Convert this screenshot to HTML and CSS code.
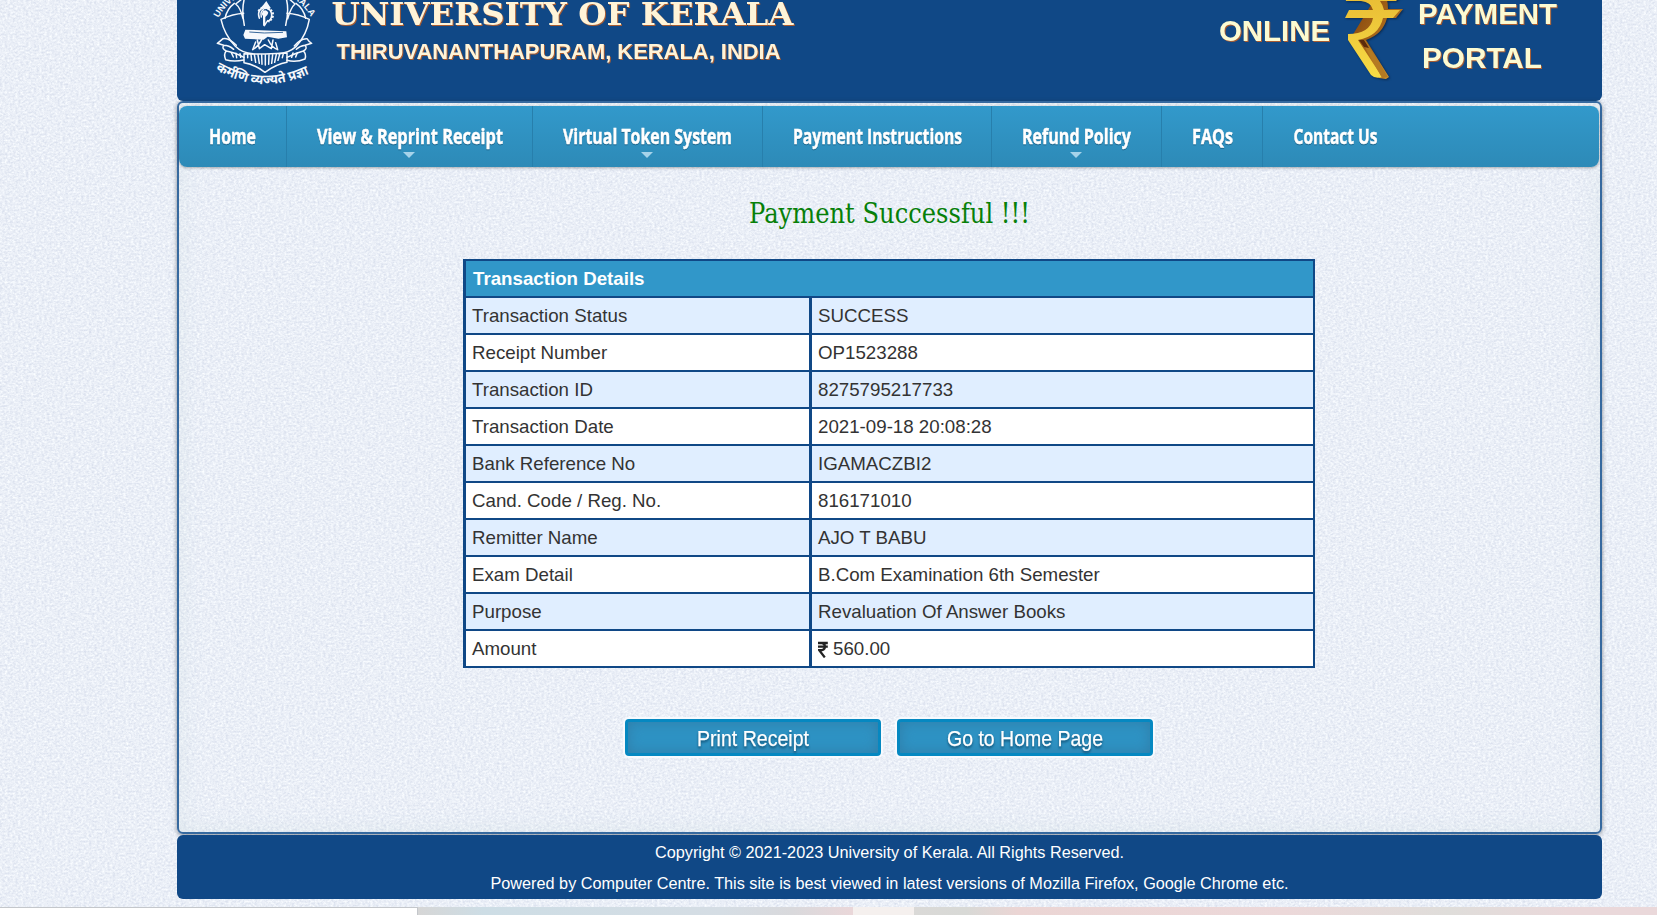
FILE: index.html
```html
<!DOCTYPE html>
<html lang="en">
<head>
<meta charset="utf-8">
<title>University of Kerala - Online Payment Portal</title>
<link rel="stylesheet" href="styles.css">
</head>
<body>
<svg class="texture" aria-hidden="true">
  <filter id="weave" x="0" y="0" width="100%" height="100%" color-interpolation-filters="sRGB">
    <feTurbulence type="fractalNoise" baseFrequency="0.38 0.5" numOctaves="3" seed="4" stitchTiles="stitch"/>
    <feColorMatrix values="0.19 0 0 0 0.823  0.17 0 0 0 0.851  0.11 0 0 0 0.913  0 0 0 0 1"/>
  </filter>
  <rect width="100%" height="100%" filter="url(#weave)"/>
</svg>
<div class="page">
  <header class="banner">
    <svg width="1425" height="101" viewBox="177 0 1425 101">
      <defs>
        <linearGradient id="gold" x1="0" y1="0" x2="0" y2="1"><stop offset="0" stop-color="#e9bd35"/><stop offset="1" stop-color="#f7dc45"/></linearGradient>
        <linearGradient id="bronze" x1="0" y1="0" x2="1" y2="1"><stop offset="0" stop-color="#7a3d0c"/><stop offset=".55" stop-color="#b06f1c"/><stop offset="1" stop-color="#dca236"/></linearGradient>
        <path id="arcTop" d="M40 54 A158 158 0 0 1 322 60"/>
        <path id="arcBottom" d="M32 209 Q175 292 322 216"/>
      </defs>
      <g class="emblem" transform="translate(205 0) scale(.3333)">
        <text class="ring"><textPath href="#arcTop" textLength="338" lengthAdjust="spacingAndGlyphs">UNIVERSITY OF KERALA</textPath></text>
        <text class="motto"><textPath href="#arcBottom" textLength="294" lengthAdjust="spacingAndGlyphs">कर्मणि व्यज्यते प्रज्ञा</textPath></text>
        <g class="lines">
          <path d="M120 -10 L92 12 Q106 22 114 56 M120 -10 Q108 25 118 76 M245 -10 L270 12 Q258 22 248 56 M242 -10 Q254 25 242 76"/>
          <path d="M116 40 Q85 42 48 58 Q58 104 91 139 Q112 160 144 161 M246 40 Q278 42 313 58 Q305 104 274 139 Q250 160 220 161"/>
          <path d="M88 10 Q66 26 60 55 M273 10 Q296 26 302 55"/>
          <path d="M54 116 Q43 126 37 130 L56 136 Q49 146 64 153 Q55 162 62 179 Q86 186 116 180 M54 116 Q70 111 94 136 M56 136 Q72 136 86 148 M64 153 Q88 157 117 172"/>
          <path d="M306 116 Q312 126 320 130 L300 136 Q309 146 295 153 Q305 162 300 177 Q273 188 246 181 M306 116 Q286 115 268 138 M300 136 Q284 138 274 148 M295 153 Q273 159 246 172"/>
          <path d="M117 161 Q148 163 180 162 Q217 161 246 159 L246 187 Q215 192 180 217 Q147 192 117 188 Z"/>
          <path d="M128 162 L128 173 M138 163 L140 181 M148 163 L152 187 M159 164 L163 190 M170 164 L171 193 M181 164 L181 195 M192 164 L191 193 M203 164 L200 190 M214 163 L209 187 M224 163 L219 181 M235 161 L232 173 M79 158 L85 171 M93 160 L95 173 M105 161 L107 172 M264 159 L260 172 M277 158 L272 171"/>
          <path d="M143 149 Q160 140 170 119 M157 120 L163 146 L179 134 L199 146 L204 120 M190 120 Q200 142 218 149 L212 128 M143 149 L152 126"/>
        </g>
        <path class="solid" d="M121 89 L244 94 L246 112 L220 116 L188 110 L176 119 L120 116 L115 105 Z"/>
        <path class="cut" d="M133 96 L178 99 L234 97"/>
        <g class="lines">
          <path d="M163 55 Q158 43 163 32 Q168 22 181 23 Q200 27 200 46 Q199 60 188 64 M169 51 Q165 34 176 29 M188 62 L178 77 M176 43 L177 70"/>
        </g>
        <path class="solid" d="M184 3 Q173 18 166 25 L198 25 Q190 13 184 3Z M174 33 Q185 26 190 38 Q187 48 181 51 L181 76 L174 77 L175 48 Q167 45 174 33Z"/>
        <path class="dots" d="M161 34 Q166 22 184 24 Q204 29 204 46 Q202 58 190 65"/>
      </g>
      <g class="title-text">
        <text class="name" x="331.500" y="24.500" textLength="462" lengthAdjust="spacingAndGlyphs">UNIVERSITY OF KERALA</text>
        <text class="place" x="336.500" y="58.500" textLength="444" lengthAdjust="spacingAndGlyphs">THIRUVANANTHAPURAM, KERALA, INDIA</text>
        <g class="portal">
          <text x="1219" y="40.500" textLength="111" lengthAdjust="spacingAndGlyphs">ONLINE</text>
          <text x="1418" y="23.500" textLength="139" lengthAdjust="spacingAndGlyphs">PAYMENT</text>
          <text x="1422" y="67.500" textLength="120" lengthAdjust="spacingAndGlyphs">PORTAL</text>
        </g>
      </g>
      <g class="rupee">
        <path fill="url(#bronze)" d="M1374 0 L1387 0 Q1388 4 1388 9 L1403 9 L1396 18 L1387 18 Q1383 34 1366 40 L1389 77 L1386 79 L1379 78 L1352 36 Z"/>
        <path fill="url(#gold)" d="M1345 -3 L1400 -3 L1396 1 L1380 1 Q1383 5 1384 10 L1400 10 L1393 18 L1383 18 Q1379 36 1358 40 L1382 77 Q1375 79 1371 75 L1348 40 L1348 34 Q1370 34 1373 18 L1345 18 L1349 10 L1373 10 Q1371 2 1361 1 L1346 1 Z"/>
        <path d="M1361 40 L1365 40 L1388 77 L1382 78 Z" fill="#b47a22"/>
        <path d="M1359 40 L1364 40 L1369 48 L1364 47 Z" fill="#5c2b0b"/>
      </g>
    </svg>
  </header>

  <main class="content">
    <nav class="menu">
      <a class="item"><svg width="47" height="34"><text y="24" textLength="47" lengthAdjust="spacingAndGlyphs">Home</text></svg></a>
      <a class="item more"><svg width="186" height="34"><text y="24" textLength="186" lengthAdjust="spacingAndGlyphs">View &amp; Reprint Receipt</text></svg></a>
      <a class="item more"><svg width="169" height="34"><text y="24" textLength="169" lengthAdjust="spacingAndGlyphs">Virtual Token System</text></svg></a>
      <a class="item"><svg width="169" height="34"><text y="24" textLength="169" lengthAdjust="spacingAndGlyphs">Payment Instructions</text></svg></a>
      <a class="item more"><svg width="109" height="34"><text y="24" textLength="109" lengthAdjust="spacingAndGlyphs">Refund Policy</text></svg></a>
      <a class="item"><svg width="41" height="34"><text y="24" textLength="41" lengthAdjust="spacingAndGlyphs">FAQs</text></svg></a>
      <a class="item"><svg width="85" height="34"><text x=".5" y="24" textLength="84" lengthAdjust="spacingAndGlyphs">Contact Us</text></svg></a>
    </nav>

    <h1 class="status"><svg width="284" height="40"><text x="1" y="28" textLength="281" lengthAdjust="spacingAndGlyphs">Payment Successful !!!</text></svg></h1>

    <div class="details">
      <div class="head">Transaction Details</div>
      <div class="row"><span>Transaction Status</span><span>SUCCESS</span></div>
      <div class="row"><span>Receipt Number</span><span>OP1523288</span></div>
      <div class="row"><span>Transaction ID</span><span>8275795217733</span></div>
      <div class="row"><span>Transaction Date</span><span>2021-09-18 20:08:28</span></div>
      <div class="row"><span>Bank Reference No</span><span>IGAMACZBI2</span></div>
      <div class="row"><span>Cand. Code / Reg. No.</span><span>816171010</span></div>
      <div class="row"><span>Remitter Name</span><span>AJO T BABU</span></div>
      <div class="row"><span>Exam Detail</span><span>B.Com Examination 6th Semester</span></div>
      <div class="row"><span>Purpose</span><span>Revaluation Of Answer Books</span></div>
      <div class="row"><span>Amount</span><span class="amount"><svg width="10" height="17" viewBox="0 0 10 17"><path d="M0 2H9.800M0 5.600H9.800M1 2Q7 1.600 7 5.600Q7 9.400 1.200 9.200L6.800 16.400" fill="none" stroke="#222" stroke-width="2.300"/></svg>560.00</span></div>
    </div>

    <div class="actions">
      <button class="btn"><svg width="112" height="30"><text y="22.500" textLength="112" lengthAdjust="spacingAndGlyphs">Print Receipt</text></svg></button>
      <button class="btn"><svg width="156" height="30"><text y="22.500" textLength="156" lengthAdjust="spacingAndGlyphs">Go to Home Page</text></svg></button>
    </div>
  </main>

  <footer class="footer">
    <p>Copyright © 2021-2023 University of Kerala. All Rights Reserved.</p>
    <p>Powered by Computer Centre. This site is best viewed in latest versions of Mozilla Firefox, Google Chrome etc.</p>
  </footer>
</div>
<div class="taskbar"><i class="search"></i><i class="tint-a"></i><i class="active"></i><i class="tint-b"></i></div>
</body>
</html>
```
FILE: styles.css
```css
* { box-sizing: border-box; }
html, body { margin: 0; height: 915px; overflow: hidden; }
body { background: #e9eef7; font-family: "Liberation Sans", Arial, sans-serif; }
.texture { position: absolute; inset: 0; width: 100%; height: 915px; z-index: -1; }
svg { display: block; }
.page { width: 1425px; height: 907px; margin-left: 177px; }

.banner { height: 101px; background: #104886; border-radius: 0 0 6px 6px; overflow: hidden; }
.emblem { fill: #f6f8fc; }
.emblem .ring { font: bold 27px "Liberation Sans", sans-serif; }
.emblem .motto { font: bold 40px "Noto Sans Devanagari", "Noto Sans", "FreeSans", sans-serif; }
.emblem .lines { fill: none; stroke: #f6f8fc; stroke-width: 4.5; stroke-linejoin: round; stroke-linecap: round; }
.emblem .cut { fill: none; stroke: #104886; stroke-width: 2.5; }
.emblem .dots { fill: none; stroke: #f6f8fc; stroke-width: 7; stroke-dasharray: 6 4; }
.name { font: bold 32px "DejaVu Serif", serif; fill: #fff4d8; }
.place { font: bold 22px "Liberation Sans", sans-serif; fill: #fff4d8; }
.portal { font: bold 30px "Liberation Sans", sans-serif; fill: #fcfbd2; }
.title-text { filter: drop-shadow(1px 1px 0 #a85c32); }
.rupee { filter: drop-shadow(1px 1px 1px #0a2950); }

.content {
  height: 733px; padding-top: 3px;
  border: 2px solid #36699f; border-radius: 6px;
  box-shadow: 0 1px 4px rgba(40, 50, 60, .55), inset 0 0 22px rgba(195, 215, 215, .3);
}
.menu {
  display: flex; height: 61px; width: 1420px;
  background: linear-gradient(#3299cb, #2d8ab7);
  border-radius: 8px; box-shadow: 0 1px 3px rgba(0, 0, 0, .3);
}
.item { position: relative; padding: 14px 29.5px 0 30px; border-right: 1px solid #277fac; }
.item:last-child { border-right: 0; }
.item text { font: bold 21.5px "Open Sans", sans-serif; fill: #fff; stroke: #fff; stroke-width: .5px; }
.item svg { filter: drop-shadow(0 1px 0 rgba(0, 50, 80, .45)); overflow: visible; }
.more::after {
  content: ""; position: absolute; left: calc(50% - 6px); top: 46px;
  border: 6.5px solid transparent; border-top-color: #a6d3ea; border-bottom: 0;
}
.status { margin: 28px 0 0; height: 64px; display: flex; justify-content: center; }
.status text { font: 27px "DejaVu Serif", serif; fill: #078009; }

.details {
  width: 852px; margin-left: 284px;
  border: solid #104886; border-width: 2px 2px 0 3px;
  font-size: 18.72px; line-height: 35px; color: #333;
}
.head { height: 37px; padding-left: 7px; background: #3197c9; border-bottom: 2px solid #104886; color: #fff; font-weight: bold; }
.row { display: grid; grid-template-columns: 346px 1fr; height: 37px; background: #fff; border-bottom: 2px solid #104886; }
.row:nth-child(even) { background: #e0eeff; }
.row span { padding-left: 6px; }
.row span:first-child { border-right: 3px solid #104886; }
.row .amount { display: flex; align-items: flex-start; gap: 5px; }
.amount svg { margin-top: 10px; }

.actions { display: flex; gap: 16px; margin: 51px 0 0 446px; }
.btn {
  width: 256px; height: 37px; padding: 0; display: grid; place-items: center;
  border: 3px solid #0588c1; border-radius: 4px; background: #2e93c4;
  box-shadow: 0 0 0 2px #f7fafe, inset 0 0 14px rgba(50, 100, 135, .45);
}
.btn text { font: 22.5px "Liberation Sans", sans-serif; fill: #fff; stroke: #fff; stroke-width: .25px; }
.btn svg { filter: drop-shadow(0 2px 1px rgba(0, 45, 75, .6)); overflow: visible; }

.footer { height: 64px; margin-top: 1px; padding-top: 2px; background: #104886; border-radius: 6px; color: #fff; font-size: 16.25px; text-align: center; }
.footer p { margin: 0; height: 31px; line-height: 31px; }

.taskbar { display: grid; grid-template-columns: 418px 435px 61px 1fr; height: 8px; }
.search { background: #fff; border: solid #c4c7cb; border-width: 1px 1px 0 0; }
.tint-a { background: linear-gradient(90deg, #d6d6d6, #cddde5 15%, #d5dde4 70%, #d9d9dc 86%, #ead7d9); }
.active { background: #f5f0ee; }
.tint-b { background: linear-gradient(90deg, #dad9d7, #d8d9d6 7%, #ebd5d4 14%, #ecd8d9 50%, #dfddda 72%, #ead8da 88%); }
```
